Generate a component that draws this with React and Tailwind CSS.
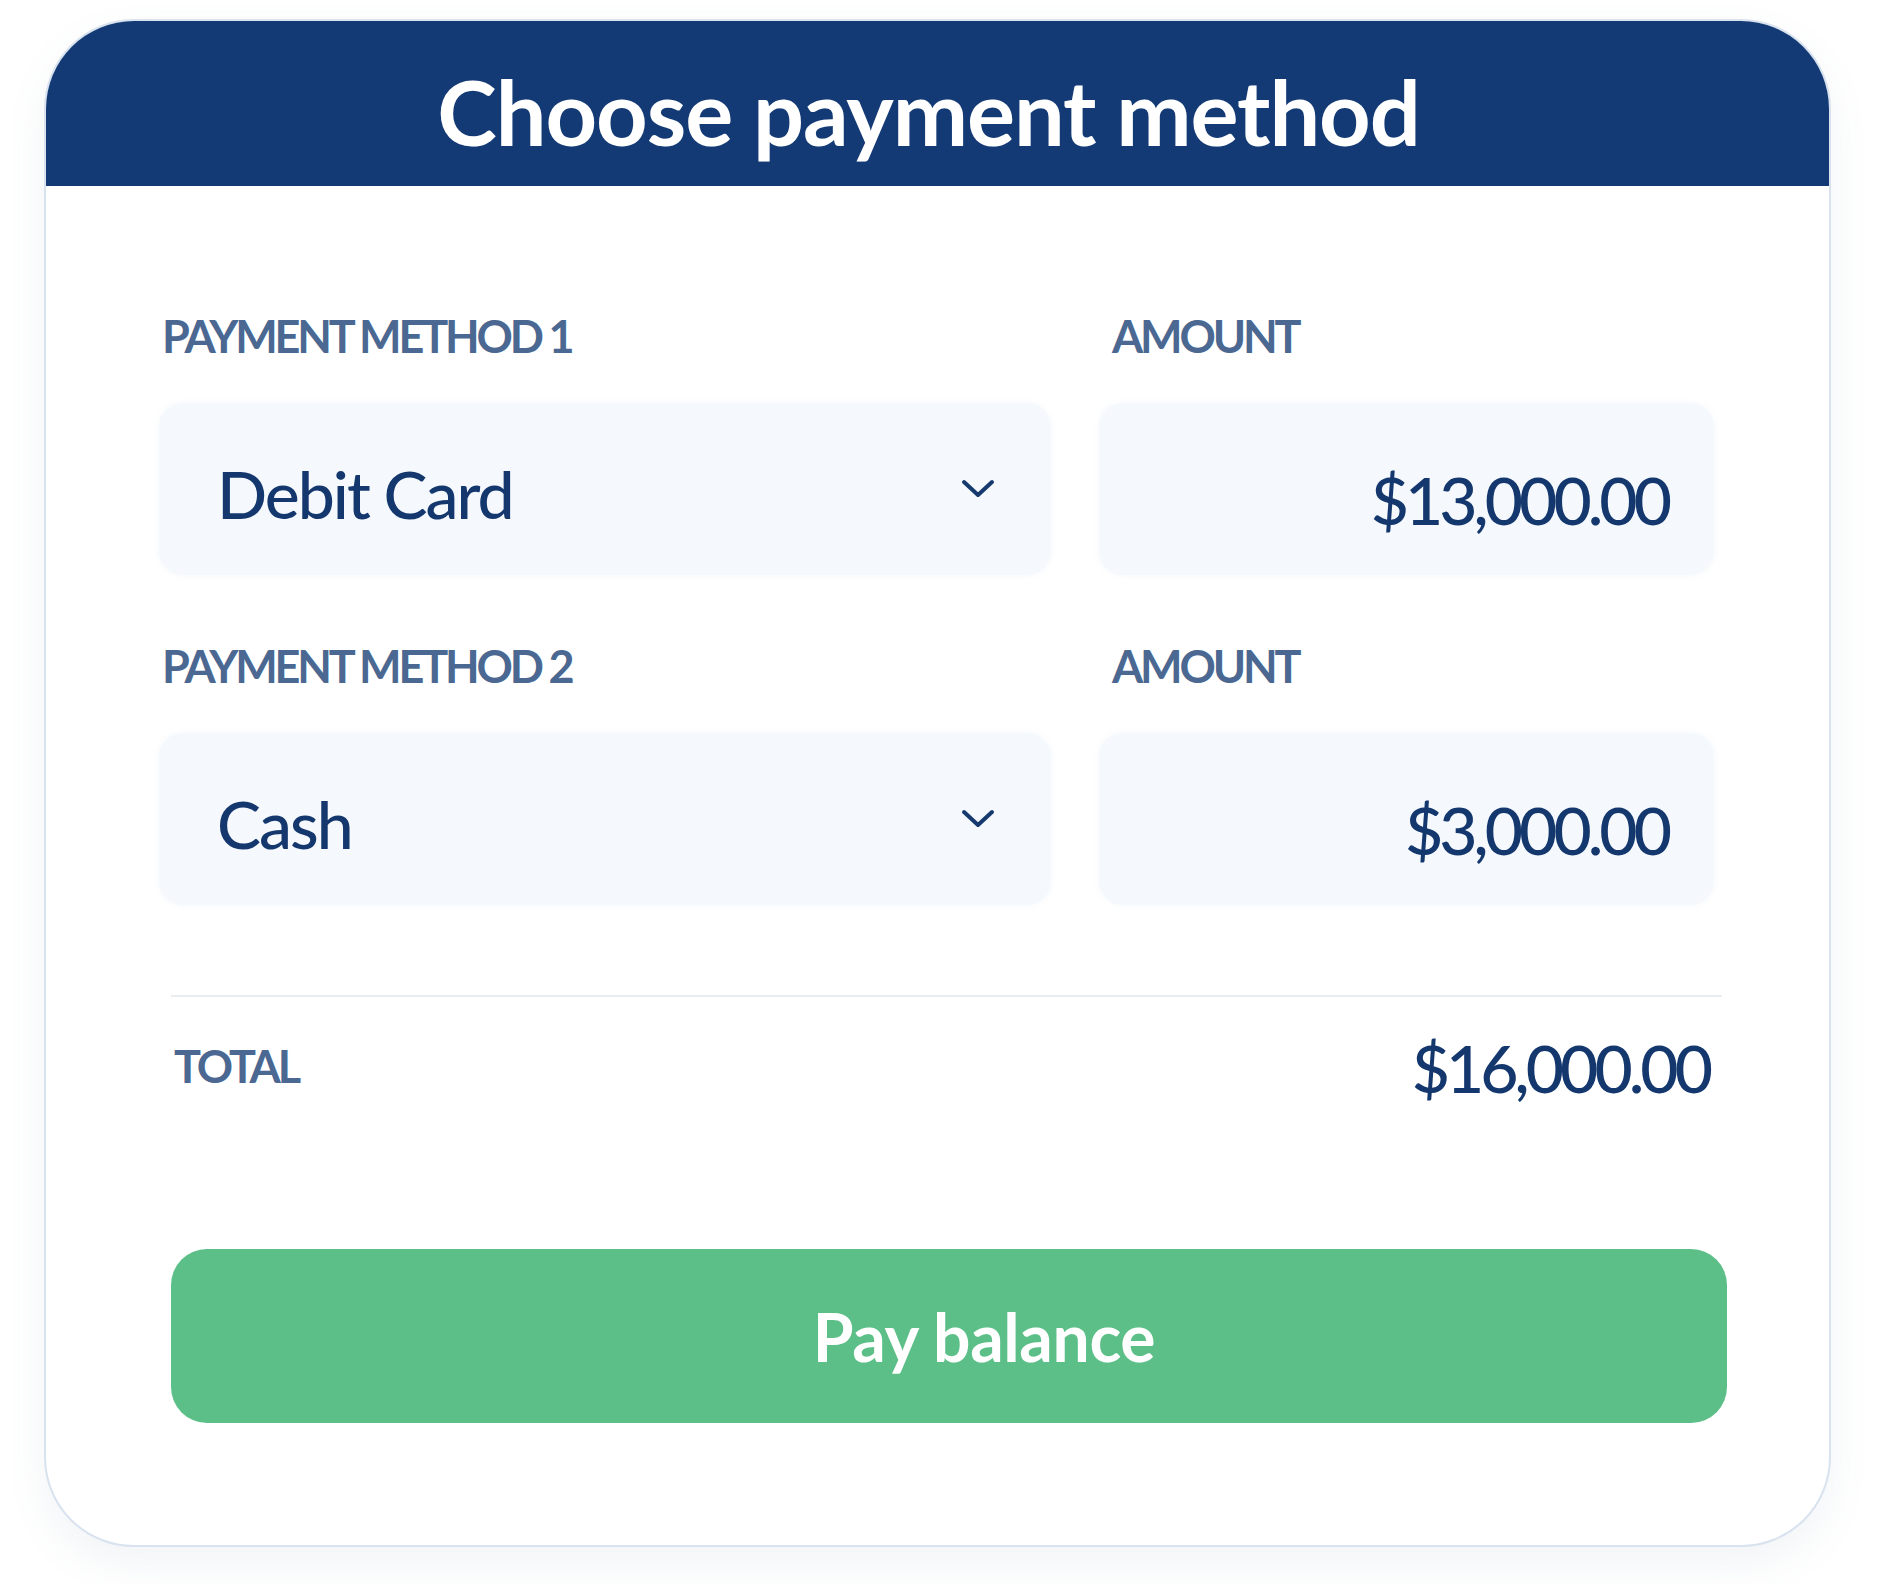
import React from "react";

const rows = [
  { label: "PAYMENT METHOD 1", method: "Debit Card", amount: 13000 },
  { label: "PAYMENT METHOD 2", method: "Cash", amount: 3000 },
];

const money = (n) =>
  "$" + n.toLocaleString("en-US", { minimumFractionDigits: 2, maximumFractionDigits: 2 });

const Label = ({ children, className = "" }) => (
  <div className={`text-[45px] leading-none font-bold tracking-[-0.07em] text-[#4a6891] ${className}`}>
    {children}
  </div>
);

const Chevron = () => (
  <svg width="34" height="20" viewBox="0 0 34 20" fill="none">
    <path d="M3 3 L17 16 L31 3" stroke="#163a6e" strokeWidth="4" strokeLinecap="round" strokeLinejoin="round" />
  </svg>
);

const PaymentRow = ({ label, method, amount }) => (
  <div className="grid grid-cols-[892px_1fr] gap-x-[48px]">
    <Label className="pl-[3px] pt-[1px]">{label}</Label>
    <Label className="pl-[13px] pt-[1px]">AMOUNT</Label>

    {/* select */}
    <div className="mt-[44px] h-[172px] rounded-[24px] bg-[#f5f9fd] shadow-[0_0_6px_rgba(120,150,190,0.08)] flex items-center justify-between pl-[58px] pr-[56px]">
      <span className="text-[66px] leading-none font-medium tracking-[-0.03em] text-[#14386e] pt-[10px]">
        {method}
      </span>
      <Chevron />
    </div>

    {/* amount */}
    <div className="mt-[44px] h-[172px] rounded-[24px] bg-[#f5f9fd] shadow-[0_0_6px_rgba(120,150,190,0.08)] flex items-center justify-end pr-[46px]">
      <span className="text-[66px] leading-none font-medium tracking-[-0.06em] text-[#14386e] pt-[22px]">
        {money(amount)}
      </span>
    </div>
  </div>
);

export default function App() {
  const total = rows.reduce((s, r) => s + r.amount, 0);

  return (
    <div className="min-h-[1584px] w-[1877px] bg-white pl-[44px] pt-[19px]" style={{ fontFamily: "Lato, 'Noto Sans', sans-serif" }}>
      <div className="w-[1787px] h-[1528px] rounded-[90px] bg-white border-2 border-[#d8e3ef] shadow-[0_18px_40px_rgba(90,110,140,0.08)] overflow-hidden flex flex-col">
        {/* header */}
        <div className="bg-[#133a74] pt-[47px] pb-[30px] pr-[18px] -mx-[2px] -mt-[2px] text-center">
          <h1 className="text-[90px] leading-none font-bold tracking-[-0.012em] text-white">
            Choose payment method
          </h1>
        </div>

        {/* form */}
        <div className="pt-[127px] pl-[113px] pr-[115px] flex flex-col gap-y-[68px]">
          {rows.map((r) => (
            <PaymentRow key={r.label} {...r} />
          ))}
        </div>

        {/* total + button */}
        <div className="pl-[125px] pr-[102px] mt-[90px]">
          <div className="h-[2px] bg-[#eaedf0] mr-[5px]" />
          <div className="mt-[36px] h-[66px] flex items-center justify-between pl-[3px] pr-[18px]">
            <Label>TOTAL</Label>
            <span className="text-[66px] leading-none font-medium tracking-[-0.06em] text-[#14386e] pt-[4px]">
              {money(total)}
            </span>
          </div>
          <button className="mt-[150px] w-full h-[174px] rounded-[36px] bg-[#5cbf88] text-white text-[66px] leading-none font-bold tracking-[-0.005em] flex items-center justify-center pl-[70px] pt-[2px]">
            Pay balance
          </button>
        </div>
      </div>
    </div>
  );
}
